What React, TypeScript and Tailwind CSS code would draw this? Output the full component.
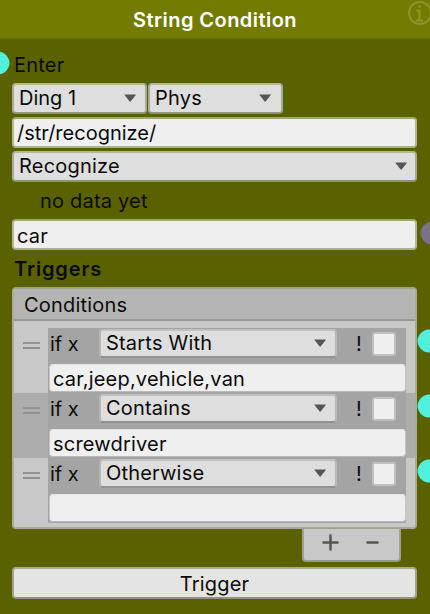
import React from "react";

function Arrow() {
  return (
    <svg className="shrink-0" width="13" height="9" viewBox="0 0 13 9" fill="#555">
      <path d="M0.7 0.5h10.900c.3 0 .4.300.2.500L6.600 7.500c-.300.400-.600.400-.900 0L.5 1C.3.800.4.500.7.500z" />
    </svg>
  );
}

const box = "flex items-center border-2 rounded-[4px] whitespace-nowrap";
const field = "border-t-[#a2a286] border-x-[#b5b59f] border-b-[#adad9d] bg-[#efefef]";
const drop = "border-t-[#b5b59b] border-x-[#aaaa9a] border-b-[#929288] bg-[#dedede]";

function Pin({ color, className = "" }: { color: string; className?: string }) {
  return (
    <svg className={"absolute " + className} width="24" height="24" viewBox="0 0 24 24" fill={color}>
      <path d="M12 0.5c3.6 0 6.600 1.600 8.700 4.300 1.700 2.200 2.800 4.500 2.800 7.200s-1.100 5-2.800 7.200c-2.100 2.700-5.100 4.300-8.700 4.300s-6.600-1.600-8.700-4.300C1.600 17 .5 14.700.5 12s1.100-5 2.800-7.200C5.400 2.100 8.400.5 12 .5z" />
    </svg>
  );
}

function Condition({ kind, value, selected }: { kind: string; value: string; selected?: boolean }) {
  return (
    <div className={"relative flex h-[65px] " + (selected ? "bg-[#adadad]" : "bg-[#c8c8c8]")}>
      <div className="flex w-[34px] flex-col gap-[3px] pl-[9px] pt-[14px]">
        <div className="h-[2px] w-[17px] bg-[#929292]" />
        <div className="h-[2px] w-[17px] bg-[#929292]" />
      </div>
      <div className="w-[358px] bg-[#a4a4a4]">
        <div className="flex h-[36px] items-start pt-[1px]">
          <span className="w-[51px] pl-[2px] pt-[3px] leading-[24px] tracking-normal">if x</span>
          <div className="flex h-[29px] w-[238px] items-center justify-between rounded-[4px] border-2 border-x-[#b8b8b8] border-t-[#c0c0c0] border-b-[#929292] bg-[#dedede] pb-[1px] pl-[5px] pr-[8px]">
            <span>{kind}</span>
            <Arrow />
          </div>
          <span className="ml-[19px] w-[16px] pt-[3px] leading-[24px]">!</span>
          <div className="mt-[3px] h-[24px] w-[24px] rounded-[3px] border-2 border-[#c0c0c0] bg-[#efefef]" />
        </div>
        <div className="ml-[1px] flex h-[28px] w-[357px] items-center rounded-[4px] border border-b-[#b8b8b8] border-t-[#e4e4e4] border-x-[#c4c4c4] bg-[#efefef] pl-[3px] pt-[1px]">
          {value}
        </div>
      </div>
      <Pin color="#50f0dc" className="left-[403px] top-[1px]" />
    </div>
  );
}

export default function App() {
  return (
    <div className="relative h-[614px] w-[430px] overflow-hidden bg-[#5a6200] font-['Inter',sans-serif] text-[20px] leading-[24px] tracking-[0.2px] text-[#0b0b0b]">
      <header className="h-[39px] border-b border-[#687000] bg-[#747c00] pt-[8px] text-center text-[20px] font-semibold tracking-[0.45px] text-white">
        <span>String Condition</span>
        <svg className="absolute -top-[1px] left-[407px]" width="26" height="28" viewBox="0 0 26 28" fill="none" stroke="#8c932e" strokeWidth="2">
          <circle cx="13" cy="14" r="11" />
          <path d="M9.500 11.500h3v9.500M9 21.500h7" />
          <circle cx="12.500" cy="7.500" r="1.200" fill="#8c932e" stroke="none" />
        </svg>
      </header>
      <main className="pl-[12px] pr-[13px]">
        <div className="h-[44px] pl-[2px] pt-[14px]">
          <Pin color="#50f0dc" className="-left-[14px] top-[51px]" />
          Enter
        </div>
        <div className="flex gap-[1px]">
          <div className={box + " " + drop + " h-[31px] w-[135px] justify-between pb-[1px] pl-[5px] pr-[8px]"}>
            <span className="tracking-normal">Ding 1</span><Arrow />
          </div>
          <div className={box + " " + drop + " h-[31px] w-[135px] justify-between pb-[1px] pl-[5px] pr-[9px]"}>
            <span>Phys</span><Arrow />
          </div>
        </div>
        <div className={box + " " + field + " mt-[3px] h-[31px] pl-[3px] tracking-normal"}>/str/recognize/</div>
        <div className={box + " " + drop + " mt-[3px] h-[31px] justify-between pb-[1px] pl-[5px] pr-[7px]"}>
          <span>Recognize</span><Arrow />
        </div>
        <div className="h-[37px] pl-[28px] pt-[7px]">no data yet</div>
        <div className={box + " " + field + " h-[31px] pl-[3px] pt-[2px]"}>
          car
          <Pin color="#7b7385" className="left-[420px] top-[221px]" />
        </div>
        <div className="h-[37px] pl-[2px] pt-[7px] font-semibold tracking-[0.85px]">Triggers</div>
        <section className="h-[242px] rounded-[4px] border-2 border-t-[#a2a286] border-x-[#aaaa9a] border-b-[#aaaa94] bg-[#c8c8c8]">
          <div className="h-[32px] rounded-t-[2px] border-b-2 border-[#999] bg-[#b4b4b4] pl-[10px] pt-[4px]">Conditions</div>
          <div className="pt-[7px]">
            <Condition kind="Starts With" value="car,jeep,vehicle,van" />
            <Condition kind="Contains" value="screwdriver" selected />
            <Condition kind="Otherwise" value="" />
          </div>
        </section>
        <div className="relative -mt-[1px] ml-[290px] flex h-[34px] w-[99px] items-center rounded-b-[4px] border-2 border-t border-x-[#a0a096] border-t-[#a0a096] border-b-[#98988c] bg-[#c8c8c8] pb-[5px]">
          <svg width="95" height="24" viewBox="0 0 95 24" stroke="#555" strokeWidth="2.500" strokeLinecap="round">
            <path d="M19.500 12.500h14M26.500 5.500v14M63.500 12.500h10" />
          </svg>
        </div>
        <div className={box + " mt-[5px] h-[32px] justify-center border-t-[#aaaa94] border-x-[#a2a292] border-b-[#92927c] bg-[#e4e4e4] pt-[2px]"}>Trigger</div>
      </main>
    </div>
  );
}
